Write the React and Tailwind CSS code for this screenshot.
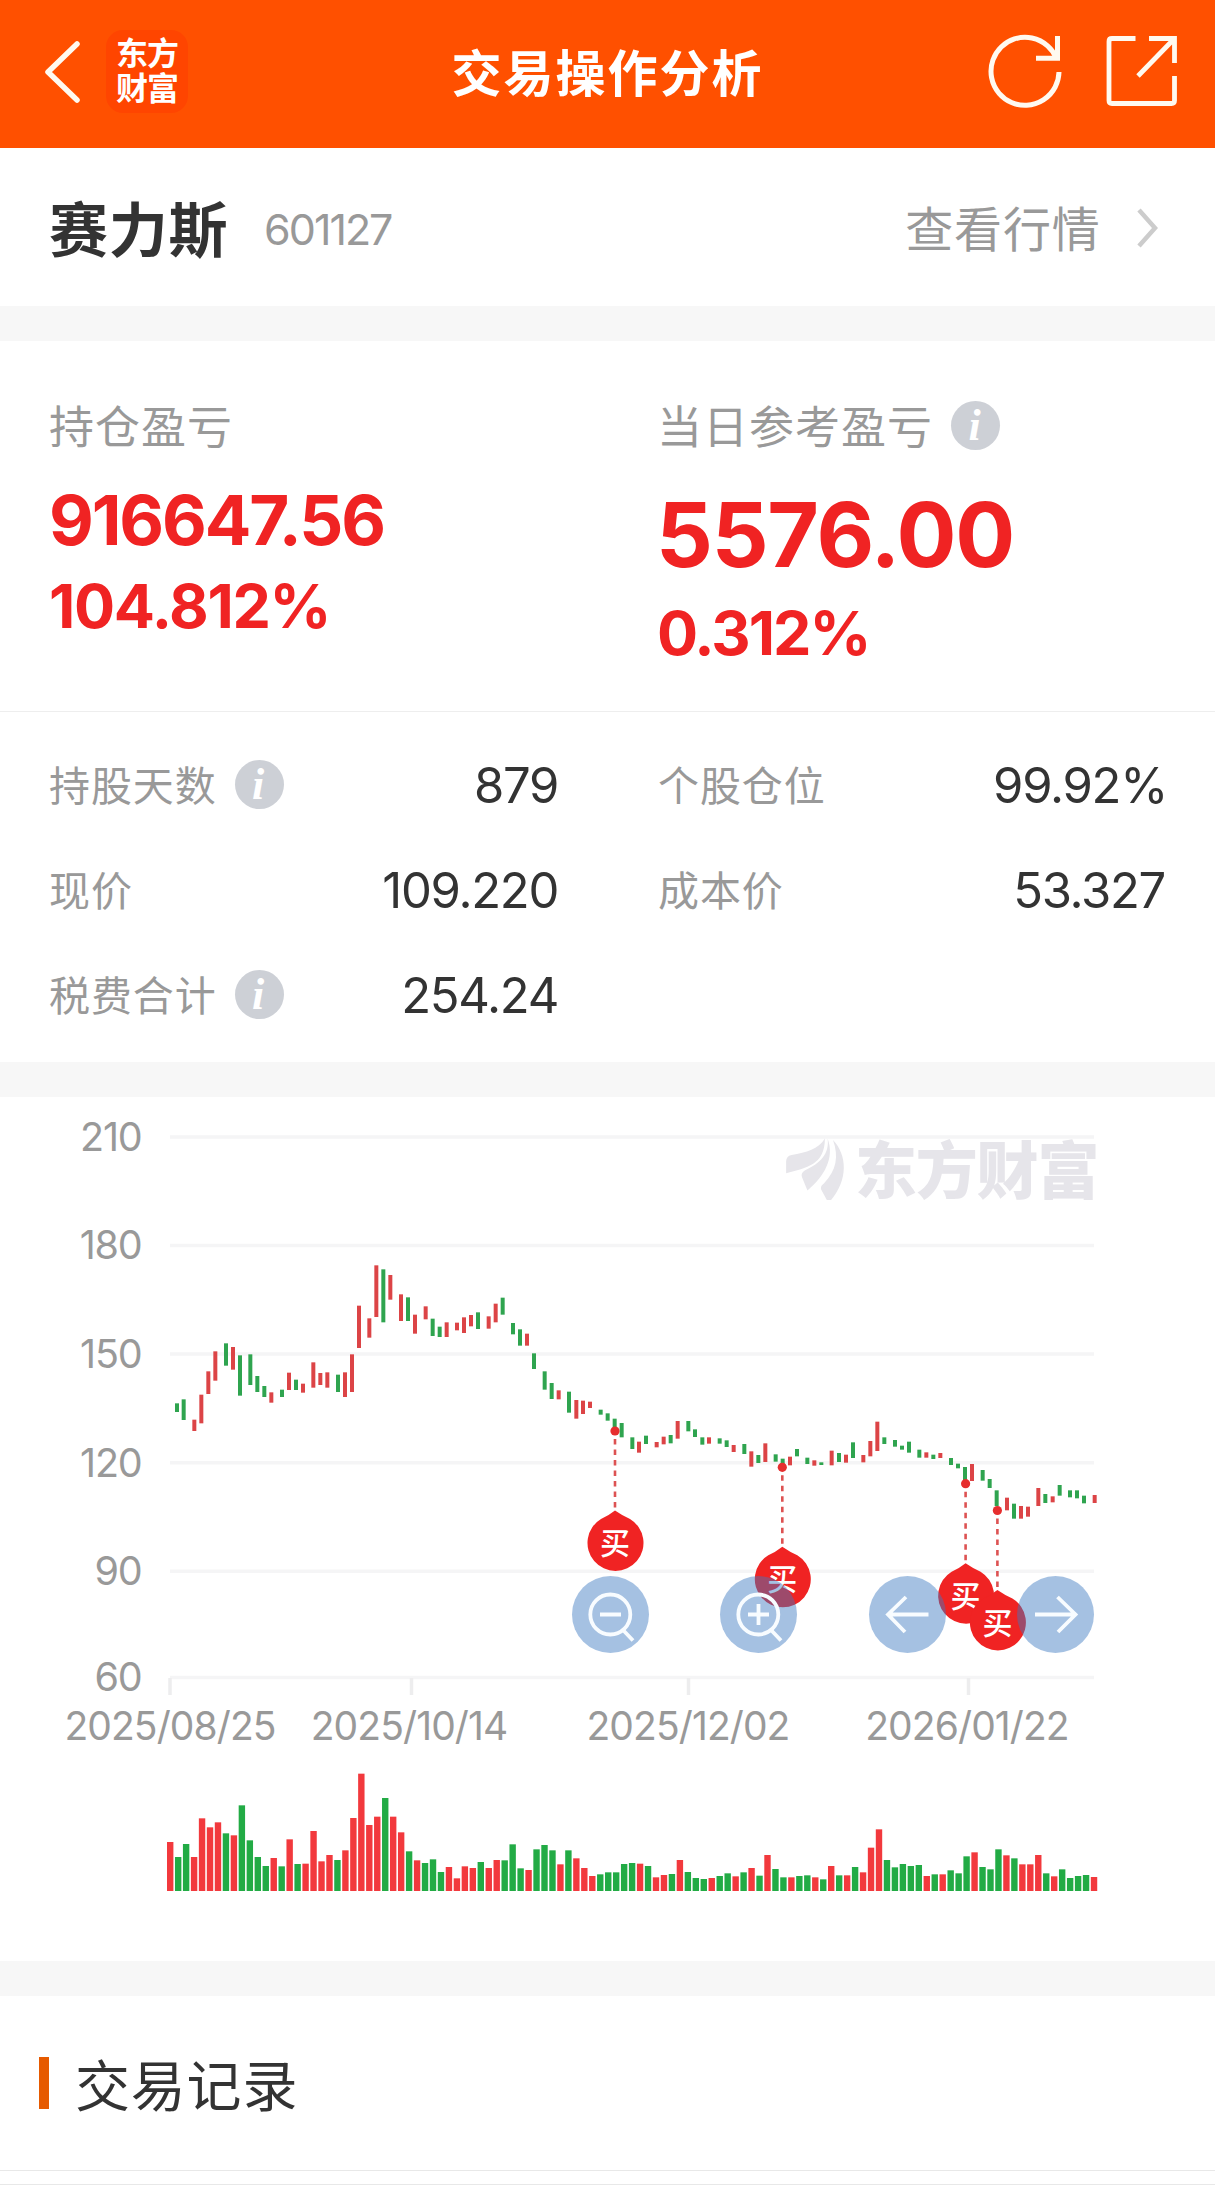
const FONT = "font-['Inter','Noto_Sans_CJK_SC',sans-serif]";

// Daily price ranges: [x, high, low, up?] in thirds of a pixel, grouped by chart segment.
const CANDLES = [
  {
    x: 150,
    y: 1200,
    bars: [
      [81, 610, 636, 0], [101, 598, 660, 0], [133, 659, 693, 1], [154, 584, 670, 1], [175, 514, 582, 1],
      [196, 454, 542, 1], [228, 430, 497, 0], [249, 441, 509, 1], [270, 466, 587, 0], [301, 463, 555, 0],
      [322, 528, 576, 0], [343, 558, 591, 0], [364, 577, 608, 1], [396, 569, 591, 0], [417, 518, 570, 1],
      [438, 539, 570, 0], [459, 551, 578, 1], [490, 487, 563, 1], [511, 519, 555, 1], [532, 517, 563, 1],
      [564, 524, 576, 0], [585, 517, 591, 1], [606, 463, 576, 1], [627, 317, 444, 1], [658, 355, 413, 1],
      [679, 196, 351, 1], [700, 208, 367, 0], [721, 225, 299, 1], [753, 283, 363, 1], [774, 292, 363, 0],
      [795, 344, 401, 1], [827, 319, 358, 1], [848, 356, 408, 0], [869, 380, 411, 0], [890, 367, 411, 1],
      [921, 368, 391, 1], [942, 352, 399, 1], [963, 345, 379, 1], [984, 337, 387, 0], [1016, 349, 386, 1],
      [1037, 311, 367, 1], [1058, 293, 344, 0], [1089, 369, 403, 0], [1110, 388, 437, 0], [1131, 401, 437, 1],
      [1152, 460, 507, 0], [1184, 514, 569, 0], [1205, 549, 597, 0], [1226, 571, 598, 1], [1257, 575, 638, 0],
    ],
  },
  {
    x: 480,
    y: 1340,
    bars: [
      [289, 180, 236, 1], [309, 182, 222, 1], [330, 185, 204, 1], [362, 209, 224, 0], [383, 220, 242, 0],
      [404, 236, 265, 0], [425, 249, 292, 0], [457, 292, 327, 0], [477, 305, 338, 1], [498, 287, 312, 0],
      [530, 306, 322, 1], [551, 290, 313, 1], [572, 285, 310, 0], [593, 243, 296, 1], [625, 243, 274, 0],
      [645, 268, 291, 0], [667, 292, 314, 0], [687, 292, 311, 1], [719, 295, 311, 0], [740, 301, 321, 0],
      [761, 315, 336, 1], [793, 312, 342, 0], [814, 334, 380, 1], [835, 345, 369, 0], [856, 310, 366, 1],
      [887, 343, 365, 0], [908, 356, 375, 0], [930, 350, 376, 1], [951, 327, 349, 0], [982, 353, 372, 0],
      [1003, 361, 377, 1], [1024, 367, 375, 0], [1055, 332, 376, 1], [1077, 339, 366, 0], [1098, 344, 368, 1],
      [1119, 307, 354, 0],
    ],
  },
  {
    x: 820,
    y: 1380,
    bars: [
      [130, 225, 247, 1], [151, 183, 229, 1], [172, 125, 213, 1], [193, 172, 192, 0], [225, 180, 200, 0],
      [246, 197, 209, 0], [267, 185, 218, 0], [298, 209, 233, 0], [319, 217, 233, 1], [340, 224, 237, 0],
      [361, 219, 234, 1], [393, 234, 255, 0], [414, 251, 265, 0], [435, 261, 302, 0], [456, 252, 303, 1],
      [488, 270, 302, 0], [509, 297, 324, 0], [530, 331, 378, 0], [561, 353, 391, 1], [582, 371, 416, 0],
      [603, 378, 416, 1], [624, 380, 410, 1], [655, 324, 378, 1], [676, 342, 369, 0], [698, 349, 367, 1],
      [719, 315, 347, 0], [750, 331, 352, 0], [771, 331, 355, 0], [792, 347, 370, 0], [824, 345, 369, 1],
    ],
  },
];

// Volume bars: height in thirds of a pixel followed by r (up) or g (down).
const VOLUME =
  "147r 102g 141g 102r 218r 191r 206r 173g 167r 257g 152g 102g 75g 99r 74g 155r 81g 82r 180r 89r 108r 93g 122r 219r 352r 198r 223r 279g 223r 176r 119g 92r 84g 95g 57g 72r 38r 74r 69r 87g 69r 93r 92g 140g 68g 63r 125g 138g 122g 80r 122g 98r 69r 45r 50g 56g 56g 81g 84g 82r 75g 41r 48r 51g 93r 57g 39g 36g 39r 45g 53g 44r 56g 69r 46g 108r 66g 41g 41r 45g 47g 41r 35g 75r 47g 47r 72g 56r 130r 185r 93g 71g 81g 75g 78g 45r 50g 50r 62g 53g 104g 116r 72g 65g 125g 107r 98g 80r 80r 108r 53g 44r 65g 39g 45g 48g 42r".split(" ");

const GRID = [[1137, "210"], [1245.5, "180"], [1354, "150"], [1462.7, "120"], [1571.3, "90"], [1677.5, "60"]];
const TICKS = [[170, 170, "2025/08/25"], [411.5, 409, "2025/10/14"], [688.5, 688, "2025/12/02"], [968.5, 967, "2026/01/22"]];
const TRADES = [[615, 1431], [782.3, 1467.3], [965.6, 1483.7], [997.4, 1510.5]];

function Info() {
  return (
    <span className="mb-[3px] flex size-[49px] items-center justify-center rounded-full bg-[#cdd0d6]">
      <span className="pr-0.5 font-['Liberation_Serif',serif] text-[44px] leading-[49px] font-bold text-white italic">i</span>
    </span>
  );
}

function Header() {
  return (
    <header className="flex h-[148px] items-center justify-between bg-[#ff5000] pr-[36px] pl-[42px] text-white">
      <div className="flex w-[320px] items-center pb-[5px]">
        <svg className="h-[64px] w-[40px]" viewBox="0 0 40 64" fill="none" stroke="#fffaf0" strokeWidth="5.5" strokeLinecap="round" strokeLinejoin="round">
          <path d="M35 4 6 32 35 60" />
        </svg>
        <div className="ml-[24px] flex h-[83px] w-[82px] flex-col items-center justify-center rounded-[17px] bg-[#ff4500] pb-0.5 text-[32px] leading-[35px] font-bold tracking-[-1px]">
          <span>东方</span>
          <span>财富</span>
        </div>
      </div>
      <h1 className="pr-[6px] text-[50px] leading-[60px] font-bold tracking-[2px]">交易操作分析</h1>
      <div className="flex w-[320px] items-center justify-end gap-[40px] pb-[6px]">
        <svg className="h-[80px] w-[80px]" viewBox="985 30 80 80" fill="none" stroke="#fffaf0" strokeWidth="5">
          <path d="M1059 71A34 34 0 1 1 1056.500 57.500" />
          <path d="M1057.500 35V57.200H1036" />
        </svg>
        <svg className="h-[74px] w-[74px]" viewBox="1105 34 74 74" fill="none" stroke="#fffaf0" strokeWidth="4.800">
          <path d="M1135.500 38.500H1112Q1109 38.500 1109 41.500V100.500Q1109 103.500 1112 103.500H1171.500Q1174.500 103.500 1174.500 100.500V76" />
          <path d="M1149 38.500H1174.500V63M1174 39 1138 76" />
        </svg>
      </div>
    </header>
  );
}

function Stat({ label, value, info }) {
  return (
    <div className="flex h-[105px] items-center justify-between">
      <div className="flex items-center gap-[18px]">
        <span className="text-[41px] leading-[50px] tracking-[0.9px] text-[#999]">{label}</span>
        {info && <Info />}
      </div>
      <span className={`text-[49px] leading-[60px] tracking-[-1.3px] ${value.endsWith("%") ? "-mr-[2px]" : ""}`}>{value}</span>
    </div>
  );
}

function Pin({ x, y }) {
  return (
    <g>
      <path d={`M${x} ${y + 8}V${y + 80}`} stroke="#dd5252" strokeWidth="2.600" strokeDasharray="5.500 5" />
      <circle cx={x} cy={y} r="4.600" fill="#e62e2e" />
      <path d={`M${x} ${y + 79.500}Q${x + 8} ${y + 85} ${x + 15} ${y + 88}A28 28 0 1 1 ${x - 14} ${y + 88}Q${x - 7} ${y + 85} ${x} ${y + 79.500}Z`} fill="#f02323" />
      <text x={x} y={y + 123} textAnchor="middle" className="fill-white text-[30px] font-medium">买</text>
    </g>
  );
}

function ChartButton({ label, children }) {
  return (
    <button aria-label={label} className="size-[77px] rounded-full bg-[#3b78bf]/46">
      <svg className="size-[77px]" viewBox="0 0 77 77" fill="none" stroke="#f8fcff" strokeWidth="3.800">
        {children}
      </svg>
    </button>
  );
}

function Chart() {
  return (
    <section className="relative h-[864px] bg-white">
      <svg className="block h-[864px] w-full" viewBox="0 1097 1215 864">
        {GRID.map(([y, label]) => (
          <g key={label}>
            <path d={`M170 ${y}H1094`} stroke="#f5f5f6" strokeWidth="3.500" />
            <text x="141.500" y={y + 13.8} textAnchor="end" className="fill-[#999] text-[39.5px] tracking-[-1.2px]">{label}</text>
          </g>
        ))}
        {TICKS.map(([x, tx, label]) => (
          <g key={label}>
            <path d={`M${x} 1678V1695`} stroke="#ededee" strokeWidth="3.500" />
            <text x={tx} y="1740" textAnchor="middle" className="fill-[#999] text-[39px] tracking-[-0.9px]">{label}</text>
          </g>
        ))}
        <g fill="#e6e5ea">
          <g transform="translate(607 720) scale(0.3877 0.3333)">
            <path d="M562 1256C545 1288 515 1298 476 1305Q462 1308 462 1325V1360C515 1344 562 1335 562 1256Z" />
            <path d="M569 1256C588 1315 560 1370 517 1412L503 1372Q499 1360 510 1352C552 1330 574 1300 569 1256Z" />
            <path d="M583 1260C620 1305 622 1380 578 1440H567L552 1408Q550 1398 560 1390C592 1350 598 1310 583 1260Z" />
          </g>
          <text x="855" y="1194" className="text-[62px] font-black tracking-[-1.2px]">东方财富</text>
        </g>
        {CANDLES.map((seg) =>
          seg.bars.map(([x, top, bottom, up]) => (
            <rect key={`${seg.x}-${x}`} x={seg.x + x / 3 - 2} y={seg.y + top / 3} width="4" height={(bottom - top) / 3} fill={up ? "#dc4446" : "#2fa44f"} />
          )),
        )}
        {VOLUME.map((v, i) => {
          const h = parseInt(v, 10) / 3;
          return <rect key={i} x={167 + i * 7.964} y={1891 - h} width="6.400" height={h} fill={v.endsWith("r") ? "#f2393d" : "#22ab45"} />;
        })}
        {TRADES.map(([x, y]) => (
          <Pin key={x} x={x} y={y} />
        ))}
      </svg>
      <div className="absolute top-[479px] left-[572px] flex gap-[71.300px]">
        <ChartButton label="缩小">
          <circle cx="38.300" cy="38.500" r="20" />
          <path d="M28 38.500H49M51 54 61 64.500" />
        </ChartButton>
        <ChartButton label="放大">
          <circle cx="38.300" cy="38.500" r="20" />
          <path d="M28 38.500H49M38.500 28V49M51 54 61 64.500" />
        </ChartButton>
        <ChartButton label="向左">
          <path d="M59.500 38.500H19M37 21 19 38.500 36 56" />
        </ChartButton>
        <ChartButton label="向右">
          <path d="M18 38.500H58.500M40.500 21 58.500 38.500 41 56" />
        </ChartButton>
      </div>
    </section>
  );
}

export default function App() {
  return (
    <main className={`h-[2185px] w-[1215px] overflow-hidden bg-white text-[#333] ${FONT}`}>
      <Header />

      <section className="flex h-[158px] items-center justify-between pt-1 pr-[57px] pl-[49px]">
        <div className="flex items-center">
          <h2 className="pt-[3px] text-[59px] leading-[70px] font-bold tracking-[0.7px]">赛力斯</h2>
          <span className="ml-[36px] text-[43px] leading-[60px] tracking-[-2px] text-[#999]">601127</span>
        </div>
        <div className="flex items-center text-[#999]">
          <span className="pt-0.5 text-[48px] leading-[60px] tracking-[0.8px]">查看行情</span>
          <svg className="mb-[3px] ml-[36.5px] h-[42px] w-[21px]" viewBox="0 0 21 42" fill="none" stroke="#ccc" strokeWidth="4.500">
            <path d="M2 3 18 21 2 39" />
          </svg>
        </div>
      </section>

      <div className="h-[35px] bg-[#f7f7f7]" />

      <section className="grid h-[370px] grid-cols-[608px_1fr] pt-[62px] pl-[49px] text-[#f02323]">
        <div>
          <div className="text-[45px] leading-[50px] tracking-[1px] text-[#999]">持仓盈亏</div>
          <div className="mt-[37px] text-[69px] leading-[60px] font-bold tracking-[-2.1px]">916647.56</div>
          <div className="mt-[26px] text-[61px] leading-[60px] font-bold tracking-[-1.3px]">104.812%</div>
        </div>
        <div>
          <div className="flex h-[50px] items-center gap-[18px]">
            <span className="text-[45px] leading-[50px] tracking-[1px] text-[#999]">当日参考盈亏</span>
            <span className="pb-[3px]">
              <Info />
            </span>
          </div>
          <div className="-ml-px mt-[42px] text-[89px] leading-[80px] font-bold tracking-[-1.2px]">5576.00</div>
          <div className="mt-[28px] text-[61px] leading-[60px] font-bold tracking-[-2px]">0.312%</div>
        </div>
      </section>

      <section className="grid h-[351px] grid-cols-[509px_507px] content-start gap-x-[100px] border-t border-[#eee] pt-[21px] pl-[49px]">
        <Stat label="持股天数" value="879" info />
        <Stat label="个股仓位" value="99.92%" />
        <Stat label="现价" value="109.220" />
        <Stat label="成本价" value="53.327" />
        <Stat label="税费合计" value="254.24" info />
      </section>

      <div className="h-[35px] bg-[#f7f7f7]" />
      <Chart />
      <div className="h-[35px] bg-[#f7f7f7]" />

      <section className="flex h-[174px] items-center gap-[26px] pl-[39px]">
        <span className="h-[52px] w-[10px] bg-[#e65a00]" />
        <h3 className="pt-[6px] text-[55px] leading-[60px] tracking-[0.8px]">交易记录</h3>
      </section>
      <div className="h-[15px] border-y border-[#e8e8e8]" />
    </main>
  );
}
